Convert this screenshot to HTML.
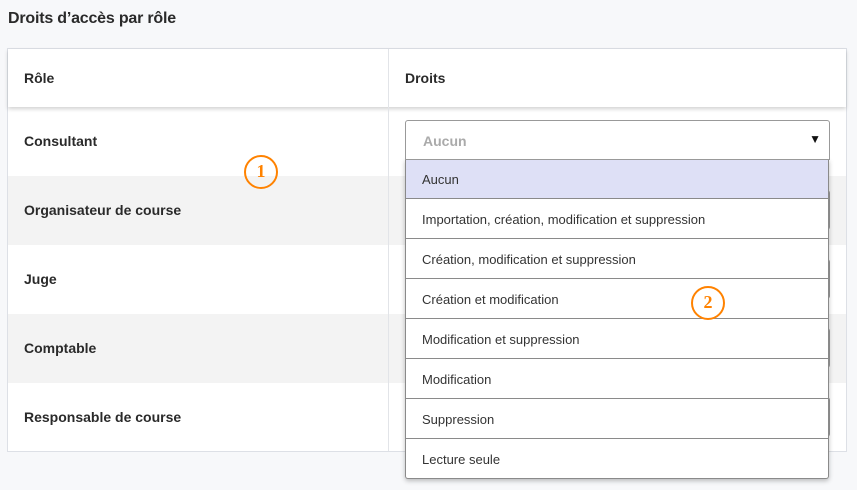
<!DOCTYPE html>
<html><head><meta charset="utf-8"><style>
*{box-sizing:border-box;margin:0;padding:0}
body{width:857px;height:490px;background:#f7f8fa;font-family:"Liberation Sans",sans-serif;color:#222;position:relative;overflow:hidden}
h1{position:absolute;left:8px;top:10px;font-size:16px;font-weight:bold;color:#2a2a2a;letter-spacing:-0.2px}
.tbl{position:absolute;left:7px;top:48px;width:840px;height:404px;background:#fff;border:1px solid #dde0e6}
.hdr{position:absolute;left:0;top:0;width:838px;height:58px;background:#fff;box-shadow:0 2px 4px rgba(0,0,0,.18);z-index:2}
.vl{position:absolute;left:380px;top:0;width:1px;height:402px;background:#e2e4e8;z-index:3}
.c{position:absolute;font-size:14px;font-weight:bold;color:#2a2a2a}
.row{position:absolute;left:0;width:838px;height:69px}
.g{background:#f3f3f3}
.sel{position:absolute;left:397px;width:425px;height:40px;background:#fff;border:1px solid #999;border-radius:3px}
.dd{position:absolute;left:405px;top:159px;width:424px;height:320px;background:#fff;border:1px solid #8a8a8a;border-top:none;box-shadow:0 2px 5px rgba(0,0,0,.25);z-index:5;border-radius:0 0 3px 3px}
.o{height:40px;border-bottom:1px solid #8a8a8a;font-size:13px;line-height:42px;padding-left:16px;color:#333}
.o:last-child{border-bottom:none}
.circ{position:absolute;width:34px;height:34px;border:2.5px solid #ff8200;border-radius:50%;color:#ff8200;font-family:"Liberation Serif",serif;font-size:18px;font-weight:bold;text-align:center;line-height:29px;z-index:9}
</style></head><body>
<h1>Droits d’accès par rôle</h1>
<div class="tbl">
<div class="hdr"><div class="c" style="left:16px;top:21px">Rôle</div><div class="c" style="left:397px;top:21px">Droits</div></div>
<div class="vl"></div>
<div class="row" style="top:58px"><div class="c" style="left:16px;top:26px">Consultant</div></div>
<div class="row g" style="top:127px"><div class="c" style="left:16px;top:26px">Organisateur de course</div><div class="sel" style="top:14px"></div></div>
<div class="row" style="top:196px"><div class="c" style="left:16px;top:26px">Juge</div><div class="sel" style="top:14px"></div></div>
<div class="row g" style="top:265px"><div class="c" style="left:16px;top:26px">Comptable</div><div class="sel" style="top:14px"></div></div>
<div class="row" style="top:334px"><div class="c" style="left:16px;top:26px">Responsable de course</div><div class="sel" style="top:14px"></div></div>
</div>
<div style="position:absolute;left:405px;top:120px;width:425px;height:40px;background:#fff;border:1px solid #999;border-radius:3px 3px 0 0;z-index:6">
<span style="position:absolute;left:17px;top:12px;font-size:14px;color:#aaa;font-weight:bold">Aucun</span>
<span style="position:absolute;right:8px;top:11px;font-size:12px;color:#111">▼</span></div>
<div class="dd">
<div class="o" style="background:#dee0f6">Aucun</div>
<div class="o">Importation, création, modification et suppression</div>
<div class="o">Création, modification et suppression</div>
<div class="o">Création et modification</div>
<div class="o">Modification et suppression</div>
<div class="o">Modification</div>
<div class="o">Suppression</div>
<div class="o">Lecture seule</div>
</div>
<div class="circ" style="left:244px;top:155px">1</div>
<div class="circ" style="left:691px;top:286px">2</div>
</body></html>
